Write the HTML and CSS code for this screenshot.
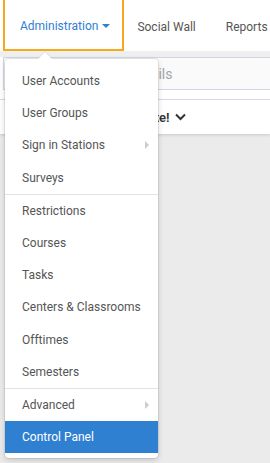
FILE: index.html
```html
<!DOCTYPE html>
<html lang="en">
<head>
  <meta charset="UTF-8" />
  <title>Administration</title>
  <meta name="viewport" content="width=device-width, initial-scale=1.0" />
  <link rel="stylesheet" href="styles.css">
</head>
<body>
  <nav class="topnav">
    <div class="nav-item active">
      Administration <span class="caret"></span>
      <div class="dropdown">
        <a class="menu-link">User Accounts</a>
        <a class="menu-link">User Groups</a>
        <a class="menu-link sub">Sign in Stations</a>
        <a class="menu-link">Surveys</a>
        <div class="divider"></div>
        <a class="menu-link">Restrictions</a>
        <a class="menu-link">Courses</a>
        <a class="menu-link">Tasks</a>
        <a class="menu-link">Centers &amp; Classrooms</a>
        <a class="menu-link">Offtimes</a>
        <a class="menu-link">Semesters</a>
        <div class="divider"></div>
        <a class="menu-link sub">Advanced</a>
        <a class="menu-link selected">Control Panel</a>
      </div>
    </div>
    <div class="nav-item">Social Wall</div>
    <div class="nav-item">Reports</div>
  </nav>

  <div class="panel">
    <div class="search">
      <input type="text" placeholder="Search by name or emails">
    </div>
    <div class="notice">
      Select your role and update!
      <svg width="11" height="8" viewBox="0 0 11 8"><path d="M1 1.5 L5.5 6 L10 1.5" fill="none" stroke="#333" stroke-width="2"/></svg>
    </div>
  </div>
</body>
</html>
```

FILE: styles.css
```css
* {
  box-sizing: border-box;
}

body {
  margin: 0;
  font-family: Roboto, 'Liberation Sans', sans-serif;
  background: #ebebeb;
  min-height: 100vh;
  overflow: hidden;
}

.topnav {
  display: flex;
  align-items: stretch;
  height: 51px;
  background: #fff;
  padding-left: 3px;
  white-space: nowrap;
  position: relative;
  z-index: 2;
}

.nav-item {
  font-size: 12px;
  color: #555;
  display: flex;
  align-items: center;
  padding: 2px 15px 0;
}

.nav-item.active {
  color: #2f80d1;
  border: 2px solid #f7a81b;
  border-top: none;
  padding: 2px 12px 0 15px;
  position: relative;
}

.nav-item.active + .nav-item {
  padding-left: 13px;
}

.caret {
  display: inline-block;
  width: 0;
  height: 0;
  margin-left: 4px;
  border-left: 4px solid transparent;
  border-right: 4px solid transparent;
  border-top: 4px solid #2f80d1;
}

.dropdown {
  position: absolute;
  top: 59px;
  left: 0;
  width: 153px;
  background: #fff;
  border-radius: 4px;
  box-shadow: 0 0 0 1px rgba(0, 0, 0, 0.07), 0 2px 6px rgba(0, 0, 0, 0.16);
  padding: 6px 0 5px;
  z-index: 5;
}

.dropdown::before {
  content: "";
  position: absolute;
  top: -7px;
  left: 33px;
  border-left: 7px solid transparent;
  border-right: 7px solid transparent;
  border-bottom: 7px solid #fff;
  filter: drop-shadow(0 -1px 0 rgba(0, 0, 0, 0.07));
}

.menu-link {
  display: block;
  height: 32.2px;
  line-height: 32px;
  padding-left: 17px;
  font-size: 12px;
  color: #555;
  position: relative;
}

.menu-link.sub::after {
  content: "";
  position: absolute;
  right: 9px;
  top: 12px;
  border-top: 4px solid transparent;
  border-bottom: 4px solid transparent;
  border-left: 4px solid #ccc;
}

.menu-link.selected {
  background: #2f80d1;
  color: #fff;
}

.divider {
  height: 1px;
  background: #e2e2e2;
}

.panel {
  background: #fff;
  padding-top: 6px;
  box-shadow: 0 1px 3px rgba(0, 0, 0, 0.15), inset 0 6px 0 #efefef;
}

.search {
  padding: 0 0 9px 3px;
  border-bottom: 1px solid #d2dae3;
}

.search input {
  display: block;
  width: 100%;
  height: 33px;
  border: 1px solid #cfd8e2;
  border-right: none;
  background: #fafafa;
  padding: 0 12px 0 8px;
  font-family: Roboto, sans-serif;
  font-size: 14px;
  color: #333;
  outline: none;
}

.search input::placeholder {
  color: #a4a4a4;
}

.notice {
  height: 34px;
  display: flex;
  align-items: center;
  gap: 5px;
  padding-left: 7px;
  font-size: 13px;
  font-weight: 600;
  color: #333;
}
```
